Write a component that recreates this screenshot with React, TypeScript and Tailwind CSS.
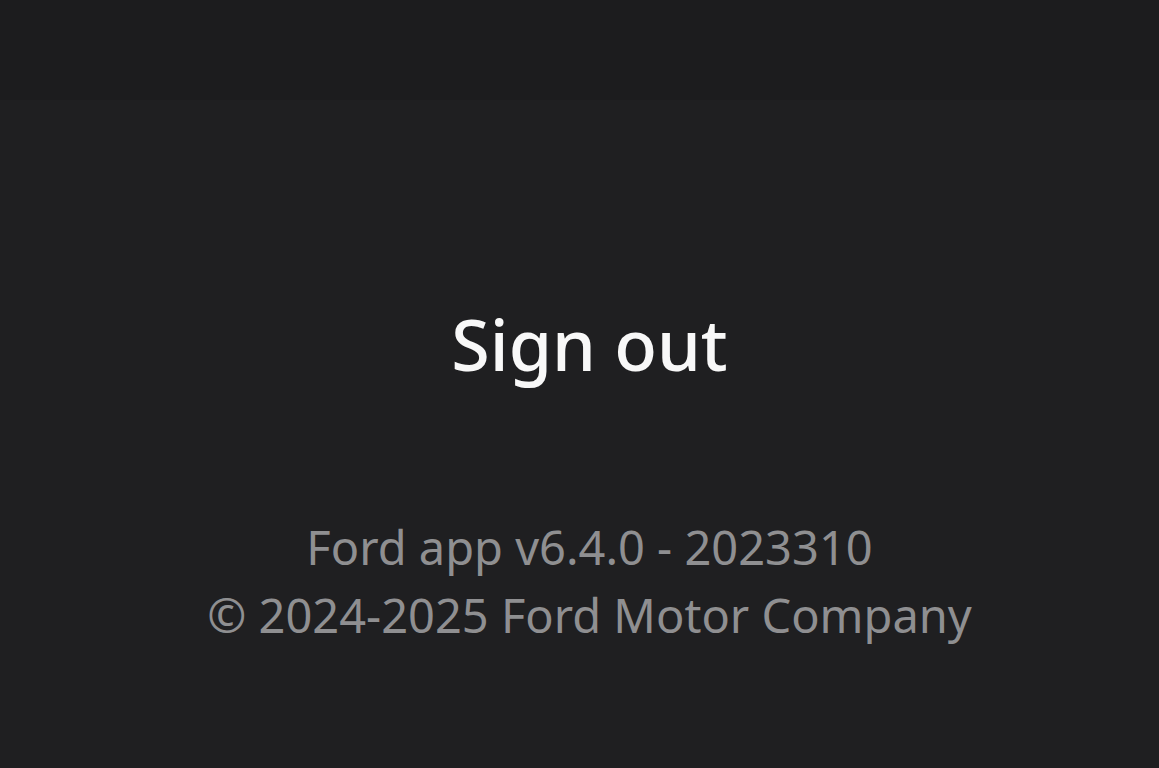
export default function App() {
  return (
    <div className="w-[1159px] h-[768px] bg-[#1f1f21] flex flex-col overflow-hidden" style={{ fontFamily: '"Noto Sans", sans-serif' }}>
      <div className="h-[100px] bg-[#1c1c1e] shrink-0" />
      <div className="flex flex-col items-center pl-[20px]">
        <div className="mt-[196px] text-[70px] leading-[96px] text-[#f8f8f8] font-medium">Sign out</div>
        <div className="mt-[121px] flex flex-col items-center text-[47px] leading-[68px] text-[#8f8f91]">
          <div>Ford app v6.4.0 - 2023310</div>
          <div>© 2024-2025 Ford Motor Company</div>
        </div>
      </div>
    </div>
  );
}
